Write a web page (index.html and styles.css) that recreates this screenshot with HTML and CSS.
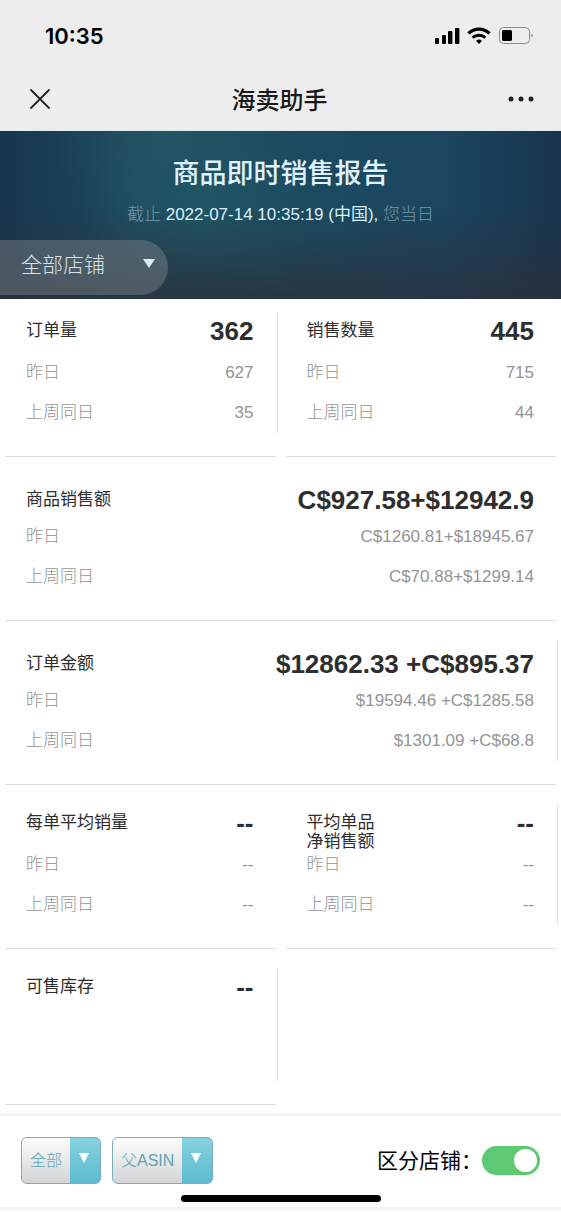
FILE: index.html
```html
<!DOCTYPE html>
<html lang="zh-CN">
<head>
<meta charset="utf-8">
<meta name="viewport" content="width=device-width, initial-scale=1">
<title>海卖助手</title>
<link rel="stylesheet" href="styles.css">
</head>
<body>
<header class="top">
  <div class="status">
    <time class="clock">10:35</time>
    <svg class="status-icons" width="102" height="20" viewBox="0 0 102 20" aria-hidden="true">
      <rect x="0" y="12" width="4" height="6" rx="1"/>
      <rect x="7" y="9" width="4" height="9" rx="1"/>
      <rect x="13" y="5" width="4.4" height="13" rx="1"/>
      <rect x="20" y="2" width="4.4" height="16" rx="1"/>
      <path d="M33.5 7.4a15 15 0 0 1 21 0" fill="none" stroke="#000" stroke-width="3.4"/>
      <path d="M37.6 11.7a9.4 9.4 0 0 1 12.8 0" fill="none" stroke="#000" stroke-width="3"/>
      <path d="M41 14.7a5 5 0 0 1 6 0L44 18z"/>
      <rect x="64.5" y="1.5" width="30" height="16" rx="4" fill="none" stroke="#8a8a8a"/>
      <rect x="67" y="4" width="10" height="11" rx="1.5"/>
      <path d="M96.5 7.5q2.5 2 0 4z" fill="#777"/>
    </svg>
  </div>
  <div class="nav">
    <button class="icon-button" type="button" aria-label="关闭">
      <svg width="22" height="22" viewBox="0 0 22 22"><path d="M2 2l18 18M20 2L2 20" stroke="#222" stroke-width="1.8" stroke-linecap="round"/></svg>
    </button>
    <h1 class="nav-title">海卖助手</h1>
    <button class="icon-button" type="button" aria-label="更多">
      <svg width="26" height="6" viewBox="0 0 26 6" fill="#222"><circle cx="3" cy="3" r="2.5"/><circle cx="13" cy="3" r="2.5"/><circle cx="23" cy="3" r="2.5"/></svg>
    </button>
  </div>
</header>

<section class="banner">
  <h2 class="banner-title">商品即时销售报告</h2>
  <p class="banner-note">截止 <strong class="banner-time">2022-07-14 10:35:19 (中国),</strong> 您当日</p>
  <div class="picker picker-store">
    <select class="picker-select" aria-label="店铺"><option>全部店铺</option></select>
    <svg class="picker-arrow" width="12" height="9" viewBox="0 0 12 9" aria-hidden="true"><path d="M0 0h12L6 9z"/></svg>
  </div>
</section>

<main class="metrics">
  <article class="metric metric-first">
    <div class="metric-body divided">
      <div class="metric-head"><h3 class="label">订单量</h3><strong class="value">362</strong></div>
      <div class="past"><span>昨日</span><span>627</span></div>
      <div class="past"><span>上周同日</span><span>35</span></div>
    </div>
  </article>
  <article class="metric metric-first">
    <div class="metric-body">
      <div class="metric-head"><h3 class="label">销售数量</h3><strong class="value">445</strong></div>
      <div class="past"><span>昨日</span><span>715</span></div>
      <div class="past"><span>上周同日</span><span>44</span></div>
    </div>
  </article>
  <article class="metric metric-wide">
    <div class="metric-body">
      <div class="metric-head"><h3 class="label">商品销售额</h3><strong class="value">C$927.58+$12942.9</strong></div>
      <div class="past"><span>昨日</span><span>C$1260.81+$18945.67</span></div>
      <div class="past"><span>上周同日</span><span>C$70.88+$1299.14</span></div>
    </div>
  </article>
  <article class="metric metric-wide">
    <div class="metric-body divided">
      <div class="metric-head"><h3 class="label">订单金额</h3><strong class="value">$12862.33 +C$895.37</strong></div>
      <div class="past"><span>昨日</span><span>$19594.46 +C$1285.58</span></div>
      <div class="past"><span>上周同日</span><span>$1301.09 +C$68.8</span></div>
    </div>
  </article>
  <article class="metric">
    <div class="metric-body">
      <div class="metric-head"><h3 class="label">每单平均销量</h3><strong class="value">--</strong></div>
      <div class="past"><span>昨日</span><span>--</span></div>
      <div class="past"><span>上周同日</span><span>--</span></div>
    </div>
  </article>
  <article class="metric">
    <div class="metric-body divided">
      <div class="metric-head"><h3 class="label">平均单品<br>净销售额</h3><strong class="value">--</strong></div>
      <div class="past"><span>昨日</span><span>--</span></div>
      <div class="past"><span>上周同日</span><span>--</span></div>
    </div>
  </article>
  <article class="metric">
    <div class="metric-body divided">
      <div class="metric-head"><h3 class="label">可售库存</h3><strong class="value">--</strong></div>
    </div>
  </article>
</main>

<footer class="toolbar">
  <div class="controls">
    <div class="picker picker-filter">
      <select class="picker-select" aria-label="范围"><option>全部</option></select>
      <svg class="picker-arrow" width="10" height="10" viewBox="0 0 10 10" aria-hidden="true"><path d="M0 0h10L5 10z"/></svg>
    </div>
    <div class="picker picker-filter">
      <select class="picker-select" aria-label="商品维度"><option>父ASIN</option></select>
      <svg class="picker-arrow" width="10" height="10" viewBox="0 0 10 10" aria-hidden="true"><path d="M0 0h10L5 10z"/></svg>
    </div>
    <label class="switch">区分店铺：<input class="switch-input" type="checkbox" role="switch" checked></label>
  </div>
  <div class="home-bar"></div>
</footer>
</body>
</html>
```

FILE: styles.css
```css
* { box-sizing: border-box; }

body {
  margin: 0;
  background: #fefefe;
  color: #2e2e2e;
  font-family: "Liberation Sans", "Noto Sans CJK SC", sans-serif;
  font-size: 17px;
}

h1, h2, h3, p { margin: 0; }

button, select, input { font: inherit; }

.top {
  background: #ededed;
  border-bottom: 1px solid #dfeaee;
}

.status {
  display: flex;
  align-items: center;
  justify-content: space-between;
  height: 68px;
  padding: 4px 24px 0 45px;
}

.clock {
  color: #000;
  font-family: Inter, sans-serif;
  font-size: 22px;
  font-weight: 600;
}

.nav {
  display: flex;
  align-items: center;
  justify-content: space-between;
  height: 62px;
  padding: 0 27px 0 29px;
}

.nav-title {
  color: #1a1a1a;
  font-family: "Noto Sans CJK SC", sans-serif;
  font-size: 24px;
  font-weight: 500;
  line-height: 34px;
}

.icon-button {
  display: flex;
  padding: 0;
  border: 0;
  background: none;
}

.banner {
  height: 168px;
  padding-top: 23px;
  text-align: center;
  background:
    linear-gradient(to bottom, transparent 45%, #2b303ccc 100%),
    radial-gradient(ellipse 120px 150px at 36% 50%, #20606680, transparent),
    radial-gradient(ellipse 110px 90px at 28% 0%, #2a5a6266, transparent),
    linear-gradient(to right, #17364d, #1e4a60 25%, #1c4a60 60%, #1b4560 80%, #19344c);
}

.banner-title {
  color: #e0f1ff;
  font-family: "Noto Sans CJK SC", sans-serif;
  font-size: 27px;
  font-weight: 500;
  line-height: 36px;
}

.banner-note {
  margin-top: 13px;
  color: #7398a8;
  font-weight: 300;
  line-height: 24px;
}

.banner-time {
  color: #d9efff;
  font-weight: 400;
}

.picker {
  display: grid;
  align-items: center;
}

.picker-select,
.picker-arrow {
  grid-area: 1 / 1;
}

.picker-select {
  appearance: none;
  margin: 0;
  border: 0;
  background: none;
}

.picker-arrow {
  justify-self: end;
  pointer-events: none;
}

.picker-store {
  width: 168px;
  height: 55px;
  margin-top: 13px;
  border-radius: 0 28px 28px 0;
  background: #8a8f9466;
}

.picker-store .picker-select {
  height: 48px;
  padding: 0 40px 0 21px;
  align-self: start;
  color: #d5e2ea;
  font-size: 21px;
  font-weight: 300;
}

.picker-store .picker-arrow {
  margin: 0 13px 8px 0;
  fill: #dcecf8;
}

.metrics {
  display: grid;
  grid-template-columns: 1fr 1fr;
}

.metric { padding: 20px 3px 0 5px; }

.metric-first { padding-top: 14px; }

.metric::after {
  content: "";
  display: block;
  height: 1px;
  margin: 23px 2px 0 0;
  background: #dedede;
}

.metric-wide { grid-column: 1 / -1; }

.metric-body {
  min-height: 120px;
  padding: 0 23px 0 21px;
  border-right: 1px solid transparent;
}

.metric:last-child .metric-body { min-height: 112px; }

.divided { border-right-color: #e4e4e4; }

.metric-head {
  display: flex;
  align-items: flex-start;
  justify-content: space-between;
  height: 40px;
  padding-top: 8px;
}

.metric-wide .metric-head { padding-top: 13px; }

.label {
  font-size: 17px;
  font-weight: 400;
  line-height: 19px;
}

.value {
  font-size: 26px;
  line-height: 21px;
}

.past {
  display: flex;
  justify-content: space-between;
  color: #949494;
  font-weight: 300;
  line-height: 40px;
}

.toolbar {
  margin-top: 8px;
  border-top: 3px solid #f3f3f3;
  border-bottom: 3px solid #f3f3f3;
}

.controls {
  display: flex;
  align-items: center;
  gap: 11px;
  padding: 21px 21px 11px;
}

.picker-filter {
  height: 47px;
  overflow: hidden;
  border: 1px solid #79adb8;
  border-radius: 6px;
  background:
    linear-gradient(#86d3e1, #5cb9d0) right / 30px 100% no-repeat,
    linear-gradient(#fdfdfd, #d2d4d5);
}

.picker-filter .picker-select {
  height: 45px;
  padding: 0 37px 0 8px;
  color: #5fa3b5;
  font-size: 16px;
  font-weight: 300;
}

.picker-filter .picker-arrow {
  margin: 0 11px 5px 0;
  fill: #fff;
}

.switch {
  display: flex;
  align-items: center;
  margin-left: auto;
  color: #000;
  font-size: 21px;
  line-height: 28px;
}

.switch-input {
  appearance: none;
  display: flex;
  justify-content: flex-end;
  width: 58px;
  height: 29px;
  margin: 0;
  padding: 3px;
  border-radius: 15px;
  background: #5fc873;
}

.switch-input::before {
  content: "";
  width: 23px;
  height: 23px;
  border-radius: 50%;
  background: #fff;
}

.switch-input:not(:checked) {
  justify-content: flex-start;
  background: #ccc;
}

.home-bar {
  width: 200px;
  height: 7px;
  margin: 0 auto 5px;
  border-radius: 4px;
  background: #000;
}
```
